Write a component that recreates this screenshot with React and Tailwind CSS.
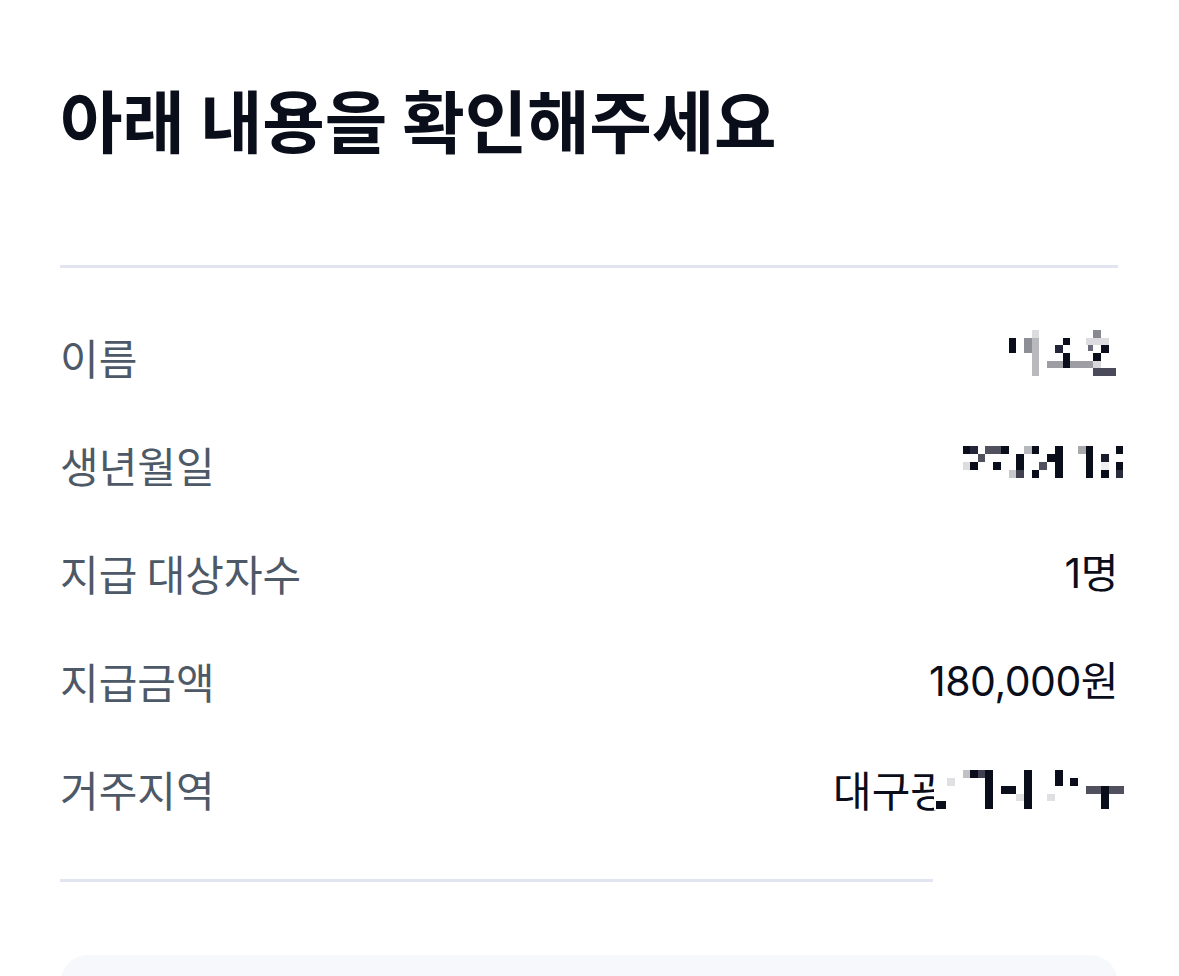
const DARK = '#0a0d1a'

const nameBlocks = [
    [3, 8, 7, 15, DARK],
    [18, 8, 8, 15, '#8e8e96'],
    [26, 0, 7, 8, '#dcdcdf'],
    [26, 8, 7, 38, '#b8b8bd'],
    [57, 8, 7, 7, DARK],
    [49, 15, 8, 8, '#23263a'],
    [57, 23, 7, 15, DARK],
    [41, 31, 16, 7, '#9d9da3'],
    [64, 31, 23, 7, '#9d9da3'],
    [87, 0, 8, 8, '#88888f'],
    [80, 8, 23, 7, '#dcdcdf'],
    [82, 15, 5, 6, '#6a6a78'],
    [95, 15, 8, 8, DARK],
    [87, 23, 8, 8, DARK],
    [87, 31, 8, 7, '#d8d8dc'],
    [87, 38, 23, 8, '#4a4a5a'],
]

const birthBlocks = [
    [2, 0, 7, 8, DARK],
    [9, 0, 8, 8, '#23263a'],
    [24, 0, 16, 8, '#50505f'],
    [40, 0, 8, 8, DARK],
    [63, 0, 8, 8, '#b8b8bd'],
    [71, 0, 7, 8, DARK],
    [94, 0, 8, 32, DARK],
    [117, 0, 8, 8, '#a8a8ad'],
    [125, 0, 7, 32, DARK],
    [155, 0, 7, 8, DARK],
    [17, 8, 7, 8, '#50505f'],
    [55, 8, 8, 16, DARK],
    [86, 8, 8, 8, DARK],
    [140, 8, 8, 8, '#1a1c2c'],
    [2, 16, 7, 8, '#dddde0'],
    [9, 16, 8, 8, DARK],
    [32, 16, 8, 8, DARK],
    [78, 16, 8, 8, '#50505f'],
    [140, 16, 8, 8, '#eeeef0'],
    [155, 16, 7, 8, DARK],
    [48, 24, 7, 8, '#c8c8cc'],
    [55, 24, 8, 8, '#40404f'],
    [71, 24, 7, 8, DARK],
    [140, 24, 8, 8, DARK],
    [155, 24, 7, 8, '#2a2c3c'],
]

const addrBlocks = [
    [5, 33, 10, 8, DARK],
    [16, 10, 8, 8, '#e0e0e3'],
    [32, 2, 7, 8, '#c0c0c5'],
    [39, 2, 8, 8, DARK],
    [47, 2, 7, 8, '#404052'],
    [54, 2, 8, 39, DARK],
    [70, 18, 15, 8, DARK],
    [85, 26, 8, 7, '#e0e0e3'],
    [93, 2, 8, 39, DARK],
    [116, 26, 8, 7, '#e0e0e3'],
    [124, 2, 8, 16, DARK],
    [139, 10, 8, 8, DARK],
    [155, 18, 15, 8, '#50505f'],
    [170, 18, 8, 23, DARK],
    [178, 18, 15, 8, '#50505f'],
]

// pixelated (censored) values
const Mosaic = ({ blocks, width, height, bg = false, className = '' }) => (
    <svg width={width} height={height} viewBox={`0 0 ${width} ${height}`} overflow="visible" className={`shrink-0 ${className}`}>
        {bg && <rect x="3" y="0" width={width + 10} height={height} fill="#ffffff" />}
        {blocks.map(([x, y, w, h, c], i) => (
            <rect key={i} x={x} y={y} width={w} height={h} fill={c} />
        ))}
    </svg>
)

const Row = ({ label, children }) => (
    <div className="flex h-[108px] items-center justify-between">
        <span className="text-[42px] leading-[42px] text-[#4e5968]">{label}</span>
        <div className="flex items-center font-['Inter','Noto_Sans_CJK_KR',sans-serif] text-[41px] leading-[42px] tracking-[-0.5px] text-[#0a0d1a]">
            {children}
        </div>
    </div>
)

const App = () => {
    return (
        <div className="min-h-screen overflow-hidden bg-white pl-[60px] pr-[61px] font-['Noto_Sans_CJK_KR','Noto_Sans',sans-serif]">
            <h1 className="pt-[85px] text-[68px] font-bold leading-[68px] tracking-[-0.2px] text-[#0a0d1a]">
                아래 내용을 확인해주세요
            </h1>

            <div className="mt-[112px] h-[3px] bg-[#e2e5ef]" />

            <div className="pt-[35px] pb-[36px]">
                <Row label="이름">
                    <Mosaic blocks={nameBlocks} width={112} height={54} />
                </Row>
                <Row label="생년월일">
                    <Mosaic blocks={birthBlocks} width={157} height={38} />
                </Row>
                <Row label="지급 대상자수">1명</Row>
                <Row label="지급금액">180,000원</Row>
                <Row label="거주지역">
                    <span className="font-['Noto_Sans_CJK_KR',sans-serif] text-[42px] tracking-normal">대구광</span>
                    <Mosaic blocks={addrBlocks} width={187} height={42} bg className="-ml-[18px]" />
                </Row>
            </div>

            <div className="h-[3px] w-[873px] bg-[#e1e5f2]" />

            <div className="mt-[73px] h-[200px] rounded-[28px] bg-[#f7f8fc]" />
        </div>
    )
}

export default App
